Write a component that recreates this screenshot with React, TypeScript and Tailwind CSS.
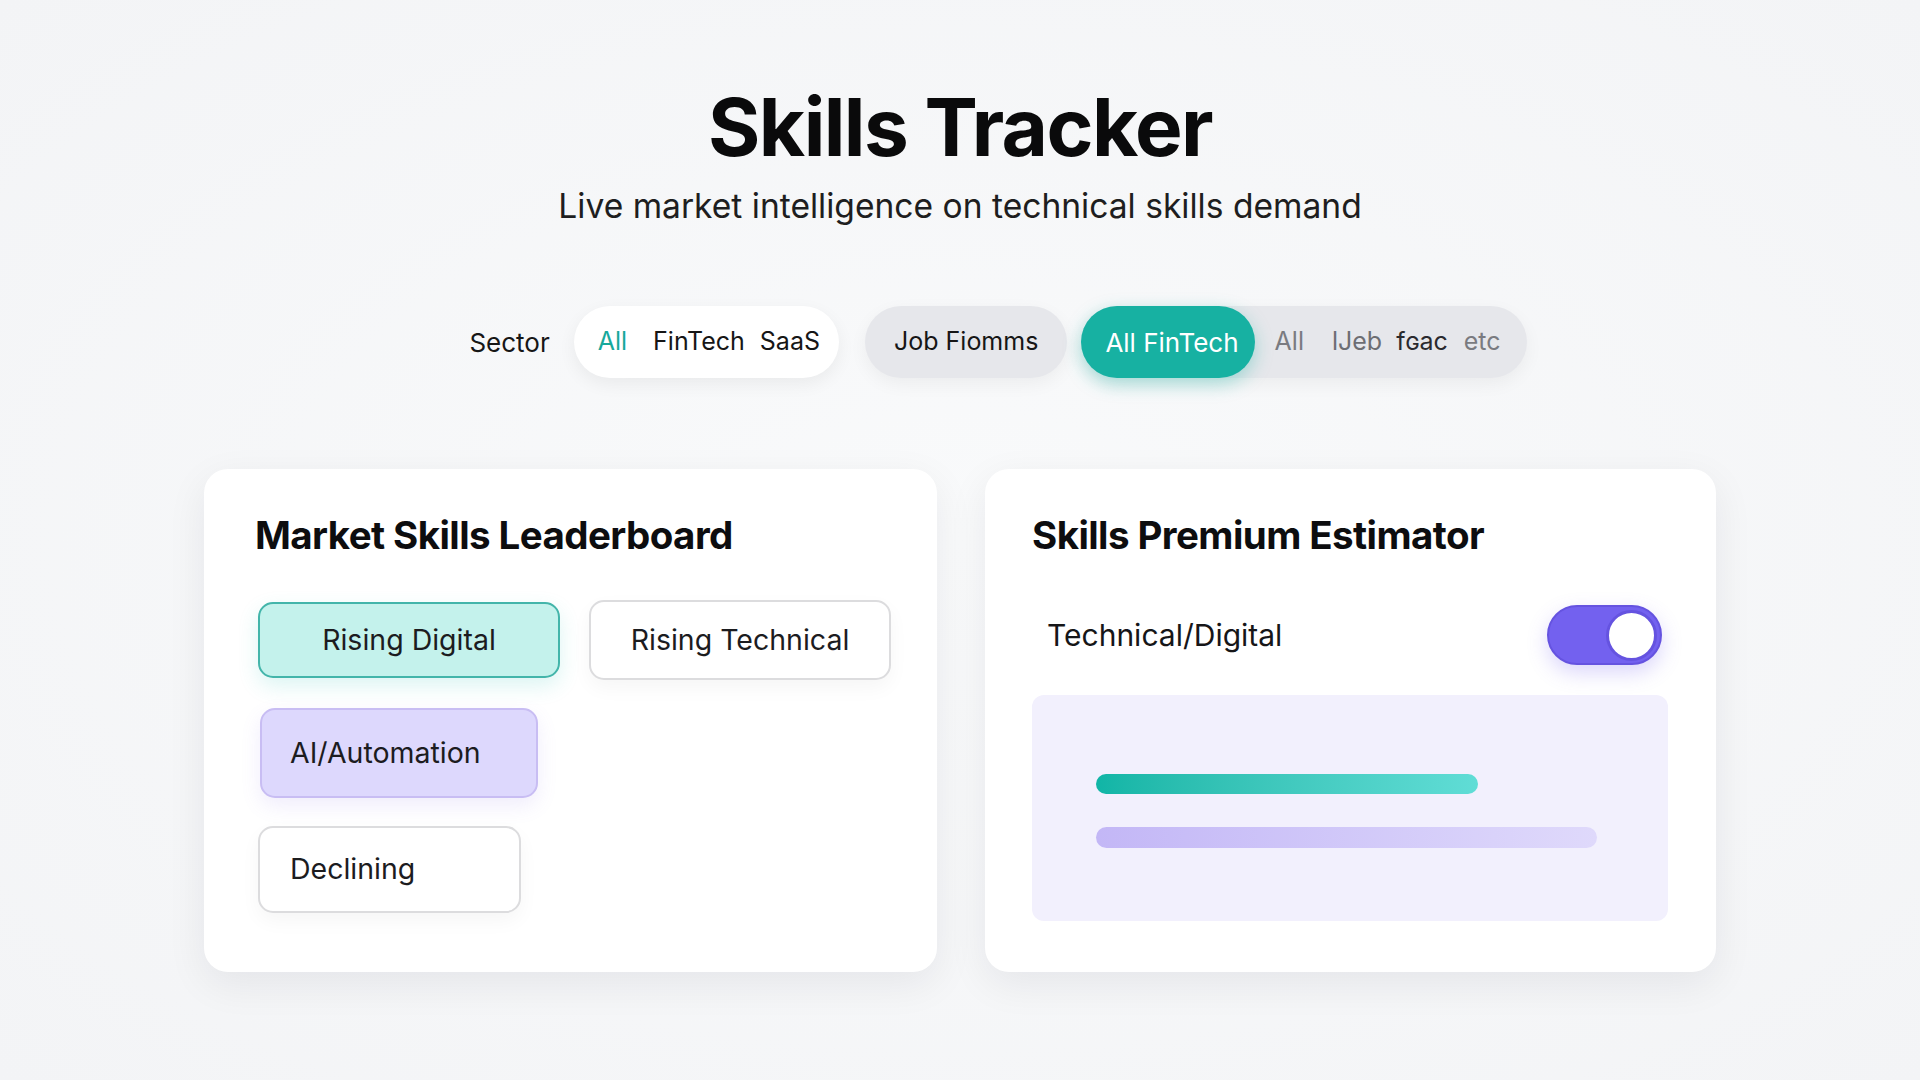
import React from "react"

const font = { fontFamily: "Inter, 'Noto Sans', sans-serif" }

function FilterBar() {
  return (
    <div className="flex items-center justify-center pl-[76px] text-[25px]">
      <span className="text-[#161616] mr-[24px] text-[26px]">Sector</span>
      <div className="flex items-center h-[72px] rounded-full bg-white pl-[24px] pr-[19px] shadow-[0_6px_18px_rgba(0,0,0,0.06)]">
        <span className="text-[#17a89b]">All</span>
        <span className="ml-[26px] text-[#161616]">FinTech</span>
        <span className="ml-[15px] text-[#161616]">SaaS</span>
      </div>
      <div className="ml-[26px] flex items-center h-[72px] rounded-full bg-[#e6e7eb] px-[29px] text-[#161616] shadow-[0_6px_18px_rgba(0,0,0,0.05)]">
        Job Fiomms
      </div>
      <div className="ml-[14px] flex items-center h-[72px] rounded-full bg-[#e6e7eb] pr-[26px] shadow-[0_6px_18px_rgba(0,0,0,0.05)]">
        <div className="flex items-center h-full rounded-full bg-[#17b1a2] pl-[24px] pr-[16px] text-white text-[26px] shadow-[0_6px_18px_rgba(23,177,162,0.35)]">
          All FinTech
        </div>
        <span className="ml-[20px] text-[#7a7b80]">All</span>
        <span className="ml-[28px] text-[#6d6e73]">lJeb</span>
        <span className="ml-[14px] text-[#2a2a2e]">fɢac</span>
        <span className="ml-[16px] text-[#7a7b80]">etc</span>
      </div>
    </div>
  )
}

function Leaderboard() {
  return (
    <div className="flex-1 h-[503px] rounded-[24px] bg-white shadow-[0_12px_40px_rgba(20,20,40,0.07)] pl-[51px] pr-[46px] pt-[44px]">
      <h2 className="text-[38.5px] font-bold tracking-[-0.015em] text-[#0d0d0f] leading-[44px]">
        Market Skills Leaderboard
      </h2>
      <div className="mt-[45px] flex flex-col items-start">
        <div className="flex items-start gap-[29px] pl-[3px]">
          <button className="w-[302px] h-[76px] rounded-[15px] border-2 border-[#43b5aa] bg-[#c4f2ec] text-[28.5px] text-[#1c1c1f] shadow-[0_8px_20px_rgba(60,200,190,0.18)]">
            Rising Digital
          </button>
          <button className="-mt-[2px] w-[302px] h-[80px] rounded-[15px] border-2 border-[#dcdcde] bg-white text-[28.5px] text-[#1c1c1f] shadow-[0_8px_20px_rgba(0,0,0,0.04)]">
            Rising Technical
          </button>
        </div>
        <button className="mt-[28px] ml-[5px] w-[278px] h-[90px] rounded-[15px] border-2 border-[#c8bdf3] bg-[#ddd8fd] pl-[28px] text-left text-[28.5px] text-[#1c1c1f] shadow-[0_8px_20px_rgba(130,110,230,0.12)]">
          AI/Automation
        </button>
        <button className="mt-[28px] ml-[3px] w-[263px] h-[87px] rounded-[15px] border-2 border-[#dcdcde] bg-white pl-[30px] text-left text-[28.5px] text-[#1c1c1f] shadow-[0_8px_20px_rgba(0,0,0,0.04)]">
          Declining
        </button>
      </div>
    </div>
  )
}

function Estimator() {
  return (
    <div className="flex-1 h-[503px] rounded-[24px] bg-white shadow-[0_12px_40px_rgba(20,20,40,0.07)] pl-[47px] pr-[48px] pt-[44px]">
      <h2 className="text-[38.5px] font-bold tracking-[-0.015em] text-[#0d0d0f] leading-[44px]">
        Skills Premium Estimator
      </h2>
      <div className="mt-[48px] flex items-center justify-between pl-[15px] pr-[6px]">
        <span className="text-[30px] text-[#161618]">Technical/Digital</span>
        <div className="flex items-center justify-end w-[115px] h-[60px] rounded-full bg-[#7361ef] border-2 border-[#6553e0] pr-[3px] shadow-[0_8px_20px_rgba(115,97,239,0.25)]">
          <div className="w-[51px] h-[51px] rounded-full bg-white border-[3px] border-[#6553e0]" />
        </div>
      </div>
      <div className="mt-[30px] h-[226px] rounded-[12px] bg-[#f2f0fd] pt-[79px] pl-[64px]">
        <div className="w-[382px] h-[20px] rounded-full bg-gradient-to-r from-[#10b5a6] to-[#60ddd6]" />
        <div className="mt-[33px] w-[501px] h-[21px] rounded-full bg-gradient-to-r from-[#c3b7f6] to-[#dfd9fb]" />
      </div>
    </div>
  )
}

export default function App() {
  return (
    <div
      className="w-[1920px] h-[1080px] overflow-hidden bg-[#f5f6f8] bg-[radial-gradient(ellipse_at_center,#f9fafb_0%,#f3f4f6_100%)]"
      style={font}
    >
      <div className="flex flex-col items-center pt-[82px]">
        <h1 className="text-[80px] font-bold tracking-[-0.02em] leading-[90px] text-[#0a0a0b]">
          Skills Tracker
        </h1>
        <p className="mt-[14px] text-[33.6px] leading-[40px] text-[#1e1e20]">
          Live market intelligence on technical skills demand
        </p>
      </div>
      <div className="mt-[80px]">
        <FilterBar />
      </div>
      <div className="mt-[91px] mx-auto w-[1512px] flex gap-[48px]">
        <Leaderboard />
        <Estimator />
      </div>
    </div>
  )
}
